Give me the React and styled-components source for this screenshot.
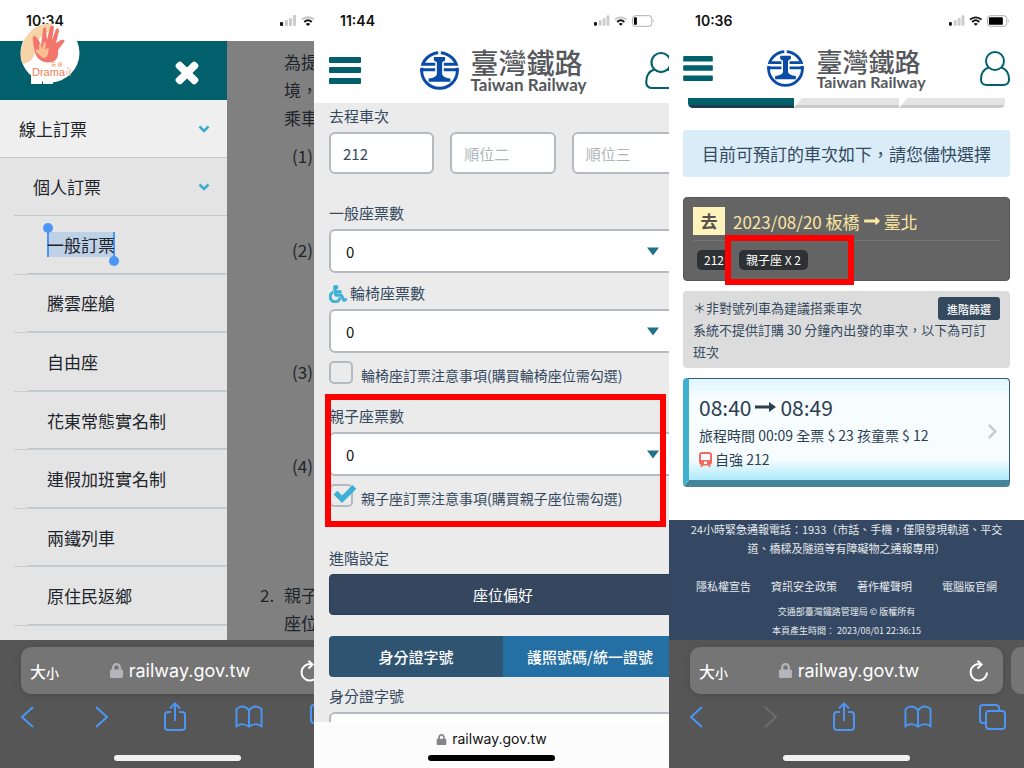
import React from "react";
import styled, { createGlobalStyle } from "styled-components";
import {
    FaChevronRight,
    FaLock,
    FaLongArrowAltRight,
    FaTimes,
    FaWheelchair,
} from "react-icons/fa";

const menuItems = [
    "一般訂票",
    "騰雲座艙",
    "自由座",
    "花東常態實名制",
    "連假加班實名制",
    "兩鐵列車",
    "原住民返鄉",
];

const rules = [
    { no: "(1)", lines: 3 },
    { no: "(2)", lines: 4 },
    { no: "(3)", lines: 3 },
    { no: "(4)", lines: 4 },
];

const StatusBar = ({ time, battery, level }) => (
    <Status>
        <Time>{time}</Time>
        <StatusIcons>
            <svg width="17" height="11" viewBox="0 0 17 11">
                <rect x="0" y="7" width="3" height="4" rx="1" fill="#111" />
                <rect x="5" y="5" width="3" height="6" rx="1" fill="#ccc" />
                <rect x="9" y="3" width="3" height="8" rx="1" fill="#ccc" />
                <rect x="13" y="0" width="3" height="11" rx="1" fill="#ccc" />
            </svg>
            <svg width="14" height="10" viewBox="0 0 14 10" fill="none">
                <path
                    d="M1 3.6C4.5.4 9.500.4 13 3.600"
                    stroke={level > 50 ? "#111" : "#c4c4c4"}
                    strokeWidth="2"
                />
                <path d="M3.300 6C5.500 4 8.500 4 10.700 6" stroke="#111" strokeWidth="2" />
                <path d="M7 10L4.800 7.900Q7 6.200 9.200 7.900Z" fill="#111" />
            </svg>
            {battery && (
                <svg width="24" height="12" viewBox="0 0 24 12">
                    <rect
                        x=".5"
                        y=".5"
                        width="20"
                        height="11"
                        rx="3"
                        fill="none"
                        stroke="#aaa"
                    />
                    <rect
                        x="2"
                        y="2"
                        width={(17 * level) / 100}
                        height="8"
                        rx="1"
                        fill="#000"
                    />
                    <path d="M22 4Q23.500 6 22 8Z" fill="#aaa" />
                </svg>
            )}
        </StatusIcons>
    </Status>
);

const RailLogo = ({ size }) => (
    <svg width={size} height={size} viewBox="0 0 118 118" fill="none">
        <circle cx="59" cy="59" r="54" stroke="#0b4ba8" strokeWidth="9" />
        <path d="M0 48H118" stroke="#fff" strokeWidth="6" />
        <path d="M59 0V18" stroke="#fff" strokeWidth="8" />
        <path d="M12 40H46M72 40H106M1 57H46M72 57H117" stroke="#0b4ba8" strokeWidth="9" />
        <path
            d="M42 18H76V29L67 34V70Q69 80 92 83V93H26V83Q49 80 51 70V34L42 29Z"
            fill="#0b4ba8"
        />
    </svg>
);

const SiteHeader = ({ large }) => (
    <Header $large={large}>
        <IconButton aria-label="選單">
            <svg
                width={large ? 32 : 30}
                height={large ? 27 : 25}
                viewBox="0 0 32 27"
                fill="#02606c"
            >
                <rect width="32" height="6" rx="1" />
                <rect y="10" width="32" height="6" rx="1" />
                <rect y="21" width="32" height="6" rx="1" />
            </svg>
        </IconButton>
        <Brand>
            <RailLogo size={large ? 39 : 37} />
            <div>
                <BrandName $large={large}>臺灣鐵路</BrandName>
                <BrandSub $large={large}>Taiwan Railway</BrandSub>
            </div>
        </Brand>
        <IconButton aria-label="會員">
            <svg
                width={large ? 32 : 30}
                height={large ? 37 : 35}
                viewBox="0 0 30 35"
                fill="none"
                stroke="#02606c"
                strokeWidth="2"
            >
                <circle cx="15" cy="10" r="9" />
                <path d="M8.500 16.500C3 18.500 1 23 1 28.500Q1 34 7 34H23Q29 34 29 28.500C29 23 27 18.500 21.500 16.500" />
            </svg>
        </IconButton>
    </Header>
);

const SafariBar = ({ noForward }) => (
    <Safari>
        <AddressRow>
            <Address>
                <TextSize aria-label="文字大小">
                    大<small>小</small>
                </TextSize>
                <Domain>
                    <FaLock size="15" color="#b4b4ba" />
                    railway.gov.tw
                </Domain>
                <IconButton aria-label="重新載入">
                    <svg
                        width="20"
                        height="22"
                        viewBox="0 0 20 22"
                        fill="none"
                        stroke="#fff"
                        strokeWidth="2"
                    >
                        <path d="M11 4.200A8.200 8.200 0 1 0 18 12.500M8.500 .8L12.500 4.500L8.500 8.500" />
                    </svg>
                </IconButton>
            </Address>
            <NextTab />
        </AddressRow>
        <Tools>
            <IconButton aria-label="上一頁">
                <svg width="14" height="28" viewBox="0 0 14 28">
                    <path d="M13 4L2 14L13 24" />
                </svg>
            </IconButton>
            <IconButton aria-label="下一頁" $dim={noForward}>
                <svg width="14" height="28" viewBox="0 0 14 28">
                    <path d="M2 4L13 14L2 24" />
                </svg>
            </IconButton>
            <IconButton aria-label="分享">
                <svg width="24" height="30" viewBox="0 0 24 30">
                    <path d="M8 10H5Q2 10 2 13V25Q2 28 5 28H19Q22 28 22 25V13Q22 10 19 10H16M12 19V2M7 6.500L12 1.500L17 6.500" />
                </svg>
            </IconButton>
            <IconButton aria-label="書籤">
                <svg width="28" height="28" viewBox="0 0 29 28">
                    <path d="M14.500 24V7Q8 0 1.500 6V23.500Q8 19 14.500 24Q21 19 27.500 23.500V6Q21 0 14.500 7" />
                </svg>
            </IconButton>
            <IconButton aria-label="分頁">
                <svg width="28" height="28" viewBox="0 0 28 28">
                    <rect x="8" y="8" width="19" height="18" rx="3" />
                    <path d="M8 20H5Q2 20 2 17V5Q2 2 5 2H17Q21 2 21 5V8" />
                </svg>
            </IconButton>
        </Tools>
        <HomeBar />
    </Safari>
);

const DramaBadge = () => (
    <Badge viewBox="0 0 60 62">
        <path d="M11 50H22V62H11ZM23 56H33V62H23Z" fill="#fff" />
        <circle cx="30" cy="31" r="29.500" fill="#fff" />
        <path
            d="M1 38C-1 22 8 8 20 3Q26 1 32 2Q34 6 28 10Q16 16 15 28Q14 38 8 40Q4 42 3 42Z"
            fill="#f8d3a8"
        />
        <path
            d="M13 18Q12 14 15 14L18 17L21 23L23 8Q24 4 26 6L27 18L30 5Q32 2 34 5L32 18L36 7Q39 5 39 9L36 21L41 18Q46 17 44 20L38 28Q39 38 32 40Q22 42 17 35Q14 31 13 18Z"
            fill="#f3766c"
        />
        <path
            d="M16 27L19 28L19 22L21 22L22 27L24 20L26 21L25 28L29 25L28 31Q28 36 23 36L16 30Z"
            fill="#f8bd92"
        />
        <text x="31" y="44" fontSize="5" fill="#f08a60">玩 樣</text>
        <text x="12" y="54" fontSize="11" fill="#ef8057">Drama</text>
        <path d="M47 46H49M47 49V53M50 47V54" stroke="#f3a57e" />
    </Badge>
);

const Arrow = () => (
    <svg width="12" height="8" viewBox="0 0 12 8" fill="none">
        <path d="M1.500 1.500L6 6L10.500 1.500" stroke="#3badd0" strokeWidth="2.600" />
    </svg>
);

const TicketSelect = ({ label, gap, icon }) => (
    <Field $gap={gap}>
        <Label>
            {icon}
            {label}
            <SelectWrap>
                <Select defaultValue="0">
                    <option>0</option>
                    <option>1</option>
                    <option>2</option>
                </Select>
                <svg viewBox="0 0 12 8">
                    <path d="M0 0H12L6 8Z" />
                </svg>
            </SelectWrap>
        </Label>
    </Field>
);

const MenuPhone = () => (
    <Phone>
        <StatusBar time="10:34" level={20} />
        <DramaBadge />
        <MenuBody>
            <Menu>
                <MenuTop>
                    <IconButton aria-label="關閉">
                        <FaTimes size="30" color="#fff" strokeWidth="36" />
                    </IconButton>
                </MenuTop>
                <MenuRow>
                    線上訂票
                    <Arrow />
                </MenuRow>
                <MenuRow $nested>
                    個人訂票
                    <Arrow />
                </MenuRow>
                <SubMenu>
                    {menuItems.map((item, i) => (
                        <li key={item}>
                            <SubLink href="#">
                                {i === 0 ? <Selected>{item}</Selected> : item}
                            </SubLink>
                        </li>
                    ))}
                </SubMenu>
            </Menu>
            <Article>
                <p>
                    為提
                    <br />
                    境，
                    <br />
                    乘車
                </p>
                {rules.map((rule) => (
                    <Rule key={rule.no} $lines={rule.lines}>
                        {rule.no}
                    </Rule>
                ))}
                <Clause>
                    <span>2.</span>
                    <p>
                        親子
                        <br />
                        座位
                    </p>
                </Clause>
            </Article>
        </MenuBody>
        <SafariBar />
    </Phone>
);

const FormPhone = () => (
    <Phone>
        <StatusBar time="11:44" battery level={18} />
        <FormPage>
            <SiteHeader large />
            <Form>
                <Field as="fieldset">
                    <Legend>去程車次</Legend>
                    <TrainInputs>
                        <TextBox aria-label="順位一" defaultValue="212" />
                        <TextBox aria-label="順位二" placeholder="順位二" />
                        <TextBox aria-label="順位三" placeholder="順位三" />
                    </TrainInputs>
                </Field>
                <TicketSelect label="一般座票數" gap={26} />
                <TicketSelect
                    label="輪椅座票數"
                    gap={7}
                    icon={
                        <FaWheelchair size="18" color="#3db1d5" strokeWidth="24" />
                    }
                />
                <CheckRow>
                    <Check type="checkbox" />
                    輪椅座訂票注意事項(購買輪椅座位需勾選)
                </CheckRow>
                <Highlighted>
                    <TicketSelect label="親子座票數" gap={19} />
                    <CheckRow>
                        <Check type="checkbox" defaultChecked />
                        <Tick viewBox="0 0 26 20">
                            <path d="M2 10L6 6L11 11L22 0L26 4L11 19Z" />
                        </Tick>
                        親子座訂票注意事項(購買親子座位需勾選)
                    </CheckRow>
                    <FormMark />
                </Highlighted>
                <Field $gap={38}>
                    <Legend as="div">進階設定</Legend>
                    <WideButton type="button">座位偏好</WideButton>
                </Field>
                <IdTabs>
                    <IdTab type="button">身分證字號</IdTab>
                    <IdTab type="button" $light>
                        護照號碼/統一證號
                    </IdTab>
                </IdTabs>
                <Field $gap={6}>
                    <Label>
                        身分證字號
                        <TextBox />
                    </Label>
                </Field>
            </Form>
        </FormPage>
        <SmallBar>
            <Domain $small>
                <FaLock size="11" color="#85858a" />
                railway.gov.tw
            </Domain>
            <HomeBar $dark />
        </SmallBar>
    </Phone>
);

const ResultPhone = () => (
    <Phone>
        <StatusBar time="10:36" battery level={85} />
        <SiteHeader />
        <Result>
            <Steps>
                <Step $active />
                <Step />
                <Step />
            </Steps>
            <Notice>目前可預訂的車次如下，請您儘快選擇</Notice>
            <Trip>
                <TripTitle>
                    <Way>去</Way>
                    2023/08/20 板橋
                    <FaLongArrowAltRight size="18" />
                    臺北
                </TripTitle>
                <Tags>
                    <Tag>212</Tag>
                    <Tag>親子座 X 2</Tag>
                </Tags>
                <TripMark />
            </Trip>
            <Info>
                <InfoTop>
                    ＊非對號列車為建議搭乘車次
                    <FilterButton>進階篩選</FilterButton>
                </InfoTop>
                <InfoText>
                    系統不提供訂購 30 分鐘內出發的車次，以下為可訂班次
                </InfoText>
            </Info>
            <Ticket href="#">
                <div>
                    <Hours>
                        08:40
                        <svg width="21" height="10" viewBox="0 0 21 10" fill="#2c3e50">
                            <path d="M0 3.500H14V0L21 5L14 10V6.500H0Z" />
                        </svg>
                        08:49
                    </Hours>
                    <TicketLine>旅程時間 00:09 全票 $ 23 孩童票 $ 12</TicketLine>
                    <TicketLine>
                        <svg width="13" height="15" viewBox="0 0 13 15" fill="#f4695c">
                            <path
                                fillRule="evenodd"
                                d="M3 0H10Q13 0 13 3V10Q13 13 10 13H3Q0 13 0 10V3Q0 0 3 0ZM2 2V8H11V2ZM5 9.500V12H8V9.500Z"
                            />
                            <path d="M3 12L1 15H3L4 13.500H9L10 15H12L10 12Z" />
                        </svg>
                        自強 212
                    </TicketLine>
                </div>
                <FaChevronRight size="17" color="#ccc" />
            </Ticket>
        </Result>
        <Footer>
            <p>
                24小時緊急通報電話：1933（市話、手機，僅限發現軌道、平交
                <br />
                道、橋樑及隧道等有障礙物之通報專用）
            </p>
            <FooterLinks>
                <a href="#">隱私權宣告</a>
                <a href="#">資訊安全政策</a>
                <a href="#">著作權聲明</a>
                <a href="#">電腦版官網</a>
            </FooterLinks>
            <Fine>交通部臺灣鐵路管理局 © 版權所有</Fine>
            <Fine>本頁產生時間： 2023/08/01 22:36:15</Fine>
        </Footer>
        <SafariBar noForward />
    </Phone>
);

const App = () => {
    return (
        <>
            <GlobalStyle />
            <Board>
                <MenuPhone />
                <FormPhone />
                <ResultPhone />
            </Board>
        </>
    );
};

const GlobalStyle = createGlobalStyle`
    * {
        box-sizing: border-box;
    }
    body {
        margin: 0;
        font-family: "Noto Sans CJK TC", sans-serif;
        color: #34495e;
        background: #ffffff;
    }
    p, ul, fieldset {
        margin: 0;
        padding: 0;
        border: 0;
        list-style: none;
    }
    button, input, select {
        font: inherit;
        color: inherit;
    }
    a {
        color: inherit;
        text-decoration: none;
    }
`;

const Board = styled.main`
    display: grid;
    grid-template-columns: 314fr 355fr 355fr;
    height: 100vh;
    overflow: hidden;
`;

const Phone = styled.section`
    position: relative;
    display: flex;
    flex-direction: column;
    min-width: 0;
    overflow: hidden;
    background: #ffffff;
`;

const Status = styled.div`
    display: flex;
    flex: none;
    align-items: center;
    justify-content: space-between;
    min-width: 355px;
    height: 41px;
    padding: 0 14px 0 26px;
`;

const Time = styled.span`
    font-family: Inter, sans-serif;
    font-size: 14px;
    font-weight: 600;
    color: #111111;
`;

const StatusIcons = styled.div`
    display: flex;
    align-items: center;
    gap: 4px;
    width: 61px;
`;

const IconButton = styled.button`
    display: flex;
    flex: none;
    align-items: center;
    justify-content: center;
    padding: 0;
    border: 0;
    background: none;
    opacity: ${(props) => (props.$dim ? 0.4 : 1)};
    filter: ${(props) => (props.$dim ? "grayscale(1)" : "none")};
`;

/* menu phone */

const Badge = styled.svg`
    position: absolute;
    top: 22px;
    left: 20px;
    z-index: 1;
    width: 60px;
    height: 62px;
    font-family: "Liberation Sans", "Noto Sans CJK TC", sans-serif;
`;

const MenuBody = styled.div`
    display: flex;
    flex: 1;
    min-height: 0;
    overflow: hidden;
    font-size: 17px;
    color: #1d242b;
`;

const Menu = styled.nav`
    display: flex;
    flex: 0 0 227px;
    flex-direction: column;
    background: #e4e4e4;
`;

const MenuTop = styled.div`
    display: flex;
    justify-content: flex-end;
    height: 59px;
    padding: 4px 25px 0 0;
    background: #02606c;
`;

const MenuRow = styled.div`
    display: flex;
    align-items: center;
    justify-content: space-between;
    height: 58px;
    margin-left: ${(props) => (props.$nested ? "14px" : 0)};
    padding: 0 17px 0 19px;
    border-bottom: 1px solid #c0c5c9;
    background: ${(props) => (props.$nested ? "none" : "#efefef")};
`;

const SubMenu = styled.ul`
    display: flex;
    flex: 1;
    flex-direction: column;
    margin-left: 14px;
    padding-bottom: 14px;

    li {
        flex: 1;
        border-bottom: 1px solid #c8cdd1;
    }
`;

const SubLink = styled.a`
    display: flex;
    align-items: center;
    height: 100%;
    margin-left: 14px;
    padding-left: 19px;
    border-bottom: 1px solid #c0c8cc;
`;

const Selected = styled.span`
    position: relative;
    line-height: 25px;
    background: #bfd1e7;
    box-shadow: inset 2px 0 #4b96f5, inset -2px 0 #4b96f5;

    &::before,
    &::after {
        content: "";
        position: absolute;
        width: 10px;
        height: 10px;
        border-radius: 50%;
        background: #4b96f5;
    }
    &::before {
        top: -9px;
        left: -4px;
    }
    &::after {
        right: -4px;
        bottom: -9px;
    }
`;

const Article = styled.article`
    flex: 1;
    padding: 7px 0 0 33px;
    line-height: 28px;
    white-space: nowrap;
    background: #808080;

    > p {
        padding-left: 24px;
        padding-bottom: 10px;
    }
`;

const Rule = styled.div`
    min-height: ${(props) => props.$lines * 28 + 10}px;
    padding-left: 32px;
`;

const Clause = styled.div`
    display: flex;
    margin-top: 7px;

    span {
        width: 24px;
    }
`;

/* safari chrome */

const Safari = styled.div`
    flex: none;
    min-width: 355px;
    height: 128px;
    overflow: hidden;
    background: #565656;
`;

const AddressRow = styled.div`
    display: flex;
    gap: 8px;
    padding: 7px 0 0 21px;
`;

const Address = styled.div`
    display: flex;
    flex: 1;
    align-items: center;
    justify-content: space-between;
    height: 47px;
    padding: 0 14px 0 9px;
    border-radius: 10px;
    background: #757575;
    box-shadow: 0 1px 6px #4a4a4a;
`;

const NextTab = styled.div`
    width: 13px;
    border-radius: 10px 0 0 10px;
    background: #757575;
`;

const TextSize = styled.button`
    padding: 0;
    border: 0;
    font-size: 16px;
    font-weight: 500;
    color: #ffffff;
    background: none;

    small {
        font-size: 13px;
    }
`;

const Domain = styled.div`
    display: flex;
    align-items: center;
    gap: 5px;
    font-family: Inter, sans-serif;
    font-size: ${(props) => (props.$small ? "14px" : "18px")};
    line-height: 20px;
    color: ${(props) => (props.$small ? "#111111" : "#ffffff")};
`;

const Tools = styled.div`
    display: flex;
    align-items: center;
    justify-content: space-between;
    height: 46px;
    padding: 0 18px 0 13px;

    button {
        width: 28px;
    }
    svg {
        flex: none;
        fill: none;
        stroke: #4b96f5;
        stroke-width: 2;
    }
`;

const HomeBar = styled.div`
    width: 127px;
    height: 6px;
    margin: 15px auto 0;
    border-radius: 3px;
    background: ${(props) => (props.$dark ? "#000000" : "#f2f2f2")};
`;

const SmallBar = styled.div`
    display: flex;
    flex: none;
    flex-direction: column;
    align-items: center;
    height: 46px;
    padding-top: 7px;
    background: #fcfcfc;

    ${HomeBar} {
        margin-top: 6px;
    }
`;

/* site header */

const Header = styled.header`
    display: flex;
    flex: none;
    align-items: center;
    justify-content: space-between;
    height: ${(props) => (props.$large ? "62px" : "57px")};
    padding: ${(props) => (props.$large ? "0 15px 3px" : "0 14px 3px")};
`;

const Brand = styled.div`
    display: flex;
    align-items: center;
    gap: 12px;
    color: #55585c;
`;

const BrandName = styled.div`
    font-size: ${(props) => (props.$large ? "28px" : "26px")};
    font-weight: 500;
    line-height: ${(props) => (props.$large ? "29px" : "27px")};
`;

const BrandSub = styled.div`
    font-family: Lato, sans-serif;
    font-size: ${(props) => (props.$large ? "17px" : "16px")};
    font-weight: 700;
    line-height: 16px;
`;

/* booking form */

const FormPage = styled.div`
    flex: 1;
    width: 378px;
    min-height: 0;
    overflow: hidden;
`;

const Form = styled.form`
    height: 100%;
    padding: 0 15px;
    font-size: 15px;
    background: #ebebeb;
`;

const Field = styled.div`
    padding-top: ${(props) => props.$gap || 0}px;
`;

const Legend = styled.legend`
    margin-bottom: 3px;
    padding: 0;
    line-height: 26px;
`;

const Label = styled.label`
    display: block;
    line-height: 26px;

    > svg {
        margin-right: 3px;
        vertical-align: -4px;
        stroke: currentColor;
    }
`;

const TrainInputs = styled.div`
    display: grid;
    grid-template-columns: repeat(3, 1fr);
    gap: 16px;
`;

const TextBox = styled.input`
    width: 100%;
    height: 42px;
    padding: 0 12px;
    border: 2px solid #b4bac0;
    border-radius: 6px;
    background: #ffffff;

    &::placeholder {
        color: #aeb4ba;
    }
    ${Label} & {
        margin-top: 3px;
    }
`;

const SelectWrap = styled.div`
    position: relative;
    margin-top: 3px;

    svg {
        position: absolute;
        top: 18px;
        right: 18px;
        width: 12px;
        height: 9px;
        fill: #20728a;
    }
`;

const Select = styled.select`
    display: block;
    width: 100%;
    height: 44px;
    padding: 2px 15px 0;
    border: 2px solid #b4bac0;
    border-radius: 6px;
    color: #111111;
    background: #ffffff;
    appearance: none;
`;

const CheckRow = styled.label`
    position: relative;
    display: flex;
    align-items: flex-end;
    gap: 8px;
    margin-top: 8px;
    font-size: 14px;
    line-height: 18px;
`;

const Check = styled.input`
    width: 24px;
    height: 23px;
    margin: 0;
    border: 2px solid #b4bac0;
    border-radius: 5px;
    appearance: none;
`;

const Tick = styled.svg`
    position: absolute;
    top: 1px;
    left: 2px;
    width: 26px;
    height: 19px;
    fill: #3db1d5;
`;

const Highlighted = styled.div`
    position: relative;
`;

const FormMark = styled.div`
    position: absolute;
    top: 10px;
    right: 11px;
    bottom: -20px;
    left: -4px;
    border: 6px solid #ff0000;
    pointer-events: none;
`;

const WideButton = styled.button`
    width: 100%;
    height: 41px;
    border: 1px solid #2b3f54;
    border-radius: 4px;
    color: #ffffff;
    background: #34475f;
`;

const IdTabs = styled.div`
    display: grid;
    grid-template-columns: 1fr 1fr;
    height: 41px;
    margin-top: 21px;
    overflow: hidden;
    border-radius: 4px;
`;

const IdTab = styled.button`
    padding: 0;
    border: 0;
    font-weight: 500;
    color: #ffffff;
    background: ${(props) => (props.$light ? "#246fa3" : "#2f5472")};
`;

/* result list */

const Result = styled.div`
    display: flex;
    flex: 1;
    flex-direction: column;
    padding: 0 14px;
`;

const Steps = styled.div`
    display: grid;
    grid-template-columns: repeat(3, 1fr);
    height: 10px;
    margin: 0 5px 22px;
    overflow: hidden;
    border-radius: 0 0 5px 5px;
`;

const Step = styled.div`
    border-bottom: 3px solid ${(props) => (props.$active ? "#1e3c4d" : "#c8cacc")};
    background: ${(props) => (props.$active ? "#02606c" : "#e4e4e4")};

    & + & {
        clip-path: polygon(8px 0, 100% 0, 100% 100%, 0 100%);
    }
`;

const Notice = styled.div`
    height: 47px;
    margin-bottom: 20px;
    border-radius: 3px;
    font-size: 17px;
    line-height: 47px;
    text-align: center;
    background: #d9ecf8;
`;

const Trip = styled.div`
    position: relative;
    height: 84px;
    margin-bottom: 10px;
    padding: 9px;
    border: 1px solid #575757;
    border-radius: 4px;
    background: #646464;
`;

const TripTitle = styled.div`
    display: flex;
    align-items: center;
    height: 34px;
    padding-bottom: 5px;
    border-bottom: 1px solid #747474;
    font-size: 17px;
    color: #fbe6a2;
    white-space: pre;

    svg {
        margin: 0 3px;
    }
`;

const Way = styled.span`
    width: 32px;
    margin-right: 8px;
    font-weight: 700;
    line-height: 28px;
    text-align: center;
    color: #55504a;
    background: #fdf2bb;
`;

const Tags = styled.div`
    display: flex;
    gap: 8px;
    padding: 9px 4px 0;
`;

const Tag = styled.span`
    padding: 0 7px;
    border-radius: 5px;
    font-size: 12px;
    line-height: 20px;
    color: #ffffff;
    background: #2e3033;
`;

const TripMark = styled.div`
    position: absolute;
    top: 37px;
    left: 41px;
    width: 129px;
    height: 50px;
    border: 6px solid #ff0000;
`;

const Info = styled.div`
    margin-bottom: 10px;
    padding: 6px 10px 5px;
    border-radius: 4px;
    font-size: 13px;
    line-height: 22px;
    background: #dcdcdc;
`;

const InfoTop = styled.div`
    display: flex;
    justify-content: space-between;
    height: 22px;
`;

const InfoText = styled.p`
    padding-right: 10px;
`;

const FilterButton = styled.button`
    width: 62px;
    height: 23px;
    padding: 0;
    border: 0;
    border-radius: 3px;
    font-size: 11px;
    font-weight: 500;
    color: #ffffff;
    background: #34495e;
`;

const Ticket = styled.a`
    display: flex;
    align-items: center;
    justify-content: space-between;
    padding: 12px 8px 9px 10px;
    border: solid;
    border-width: 1px 1px 7px 6px;
    border-color: #35597a #35597a #46849b #3fb0d0;
    border-radius: 4px;
    color: #2c3e50;
    background: linear-gradient(#dff6fe, #f7fcff 20px, #f7fcff 80px, #aeeafb);
`;

const Hours = styled.div`
    display: flex;
    align-items: center;
    gap: 4px;
    font-size: 21px;
    line-height: 32px;
`;

const TicketLine = styled.div`
    display: flex;
    align-items: center;
    gap: 3px;
    font-size: 14px;
    line-height: 24px;
`;

const Footer = styled.footer`
    flex: none;
    height: 120px;
    font-size: 11px;
    line-height: 19px;
    text-align: center;
    color: #e6e9ed;
    background: #344863;
`;

const FooterLinks = styled.div`
    display: flex;
    gap: 20px;
    padding: 19px 27px 6px;

    a:last-child {
        margin-left: auto;
    }
`;

const Fine = styled.p`
    font-size: 9px;
`;

export default App;
